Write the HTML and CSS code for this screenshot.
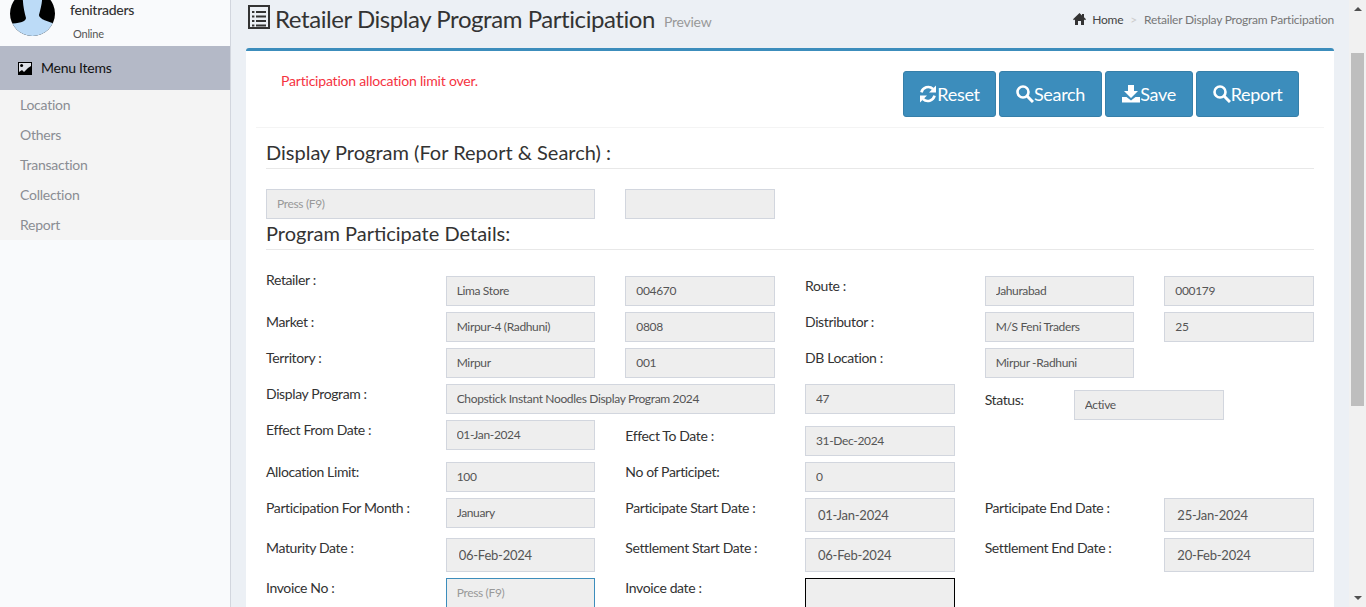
FILE: index.html
```html
<!DOCTYPE html>
<html lang="en">
<head>
    <meta charset="UTF-8">
    <meta name="viewport" content="width=device-width, initial-scale=1.0">
    <title>Retailer Display Program Participation</title>
    <link rel="stylesheet" href="styles.css">
</head>
<body>
    <div class="page">
        <aside class="sidebar">
            <div class="user-panel">
                <svg class="avatar" width="45" height="36" viewBox="0 9 45 36">
                    <clipPath id="avatarClip"><circle cx="22.5" cy="22.5" r="22.5"/></clipPath>
                    <g clip-path="url(#avatarClip)">
                        <rect width="45" height="45" fill="#000"/>
                        <path d="M13 0H32C33 10 31 16 29 24C29 27 33 29 45 33V45H0V33C8 32 16 31 16 27C14 20 12 10 13 0Z" fill="#bcdbf7"/>
                    </g>
                </svg>
                <div class="user-info">
                    <div class="user-name">fenitraders</div>
                    <div class="user-status">Online</div>
                </div>
            </div>
            <div class="menu-title">
                <svg width="14" height="13" viewBox="0 0 14 13">
                    <rect width="14" height="13" fill="#000"/>
                    <path d="M1 1H13V4L10 6L6 10L4 8L1 10Z" fill="#dfe1e8"/>
                    <circle cx="3.6" cy="3.6" r="1.5" fill="#000"/>
                </svg>
                <span>Menu Items</span>
            </div>
            <ul class="menu">
                <li>Location</li>
                <li>Others</li>
                <li>Transaction</li>
                <li>Collection</li>
                <li>Report</li>
            </ul>
        </aside>

        <main class="main">
            <div class="content-header">
                <h1>
                    <svg width="22" height="24" viewBox="0 0 22 24">
                        <rect x="1" y="1" width="20" height="22" fill="none" stroke="#333" stroke-width="2"/>
                        <path d="M4 7H6.4M8 7H18M4 11.6H6.4M8 11.6H18M4 16H6.4M8 16H18M4 20.4H6.4M8 20.4H18" stroke="#333" stroke-width="2"/>
                    </svg>
                    <span>Retailer Display Program Participation</span>
                    <small>Preview</small>
                </h1>
                <div class="breadcrumb">
                    <svg width="13" height="12" viewBox="0 0 13 12">
                        <path d="M6.5 0L9 2.4V1H11V4.3L13 6.2L12 7.2L11 6.4V12H8V8H5V12H2V6.4L1 7.2L0 6.2Z" fill="#333"/>
                    </svg>
                    <span class="crumb-home">Home</span>
                    <span class="crumb-sep">&gt;</span>
                    <span class="crumb-current">Retailer Display Program Participation</span>
                </div>
            </div>

            <section class="box">
                <div class="box-header">
                    <p class="alert">Participation allocation limit over.</p>
                    <div class="actions">
                        <button class="btn reset" type="button">
                            <svg width="18" height="18" viewBox="0 0 18 18" fill="none">
                                <path d="M2.4 7.4A7 7 0 0 1 14 4" stroke="#fff" stroke-width="2.6"/>
                                <path d="M17 0.5V7.5H10Z" fill="#fff"/>
                                <path d="M15.6 10.6A7 7 0 0 1 4 14" stroke="#fff" stroke-width="2.6"/>
                                <path d="M1 17.5V10.5H8Z" fill="#fff"/>
                            </svg>Reset</button>
                        <button class="btn search" type="button">
                            <svg width="18" height="18" viewBox="0 0 18 18" fill="none">
                                <circle cx="7" cy="7" r="5.5" stroke="#fff" stroke-width="2.6"/>
                                <path d="M11 11L17 17" stroke="#fff" stroke-width="3"/>
                            </svg>Search</button>
                        <button class="btn save" type="button">
                            <svg width="18" height="18" viewBox="0 0 18 18">
                                <path d="M6 0H12V6H16L9 13L2 6H6Z" fill="#fff"/>
                                <path d="M0 12H4.5L9 15.5L13.5 12H18V17.5H0Z" fill="#fff"/>
                            </svg>Save</button>
                        <button class="btn report" type="button">
                            <svg width="18" height="18" viewBox="0 0 18 18" fill="none">
                                <circle cx="7" cy="7" r="5.5" stroke="#fff" stroke-width="2.6"/>
                                <path d="M11 11L17 17" stroke="#fff" stroke-width="3"/>
                            </svg>Report</button>
                    </div>
                </div>

                <form class="form">
                    <h4 class="section-title first">Display Program (For Report &amp; Search) :</h4>
                    <div class="row">
                        <input class="field span-2" type="text" readonly placeholder="Press (F9)">
                        <input class="field" type="text" readonly>
                    </div>

                    <h4 class="section-title">Program Participate Details:</h4>
                    <div class="row details-start">
                        <label>Retailer :</label>
                        <input class="field shift" type="text" readonly value="Lima Store">
                        <input class="field shift" type="text" readonly value="004670">
                        <label class="shift">Route :</label>
                        <input class="field shift" type="text" readonly value="Jahurabad">
                        <input class="field shift" type="text" readonly value="000179">
                    </div>
                    <div class="row">
                        <label>Market :</label>
                        <input class="field" type="text" readonly value="Mirpur-4 (Radhuni)">
                        <input class="field" type="text" readonly value="0808">
                        <label>Distributor :</label>
                        <input class="field" type="text" readonly value="M/S Feni Traders">
                        <input class="field" type="text" readonly value="25">
                    </div>
                    <div class="row">
                        <label>Territory :</label>
                        <input class="field" type="text" readonly value="Mirpur">
                        <input class="field" type="text" readonly value="001">
                        <label>DB Location :</label>
                        <input class="field" type="text" readonly value="Mirpur -Radhuni">
                    </div>
                    <div class="row tight">
                        <label>Display Program :</label>
                        <input class="field span-2" type="text" readonly value="Chopstick Instant Noodles Display Program 2024">
                        <input class="field" type="text" readonly value="47">
                        <div class="status span-2">
                            <label class="shift status-label">Status:</label>
                            <input class="field shift status-field" type="text" readonly value="Active">
                        </div>
                    </div>
                    <div class="row">
                        <label>Effect From Date :</label>
                        <input class="field" type="text" readonly value="01-Jan-2024">
                        <label class="shift">Effect To Date :</label>
                        <input class="field shift" type="text" readonly value="31-Dec-2024">
                    </div>
                    <div class="row">
                        <label>Allocation Limit:</label>
                        <input class="field" type="text" readonly value="100">
                        <label>No of Participet:</label>
                        <input class="field" type="text" readonly value="0">
                    </div>
                    <div class="row">
                        <label>Participation For Month :</label>
                        <input class="field" type="text" readonly value="January">
                        <label>Participate Start Date :</label>
                        <input class="field date" type="text" readonly value="01-Jan-2024">
                        <label>Participate End Date :</label>
                        <input class="field date" type="text" readonly value="25-Jan-2024">
                    </div>
                    <div class="row">
                        <label>Maturity Date :</label>
                        <input class="field date" type="text" readonly value="06-Feb-2024">
                        <label>Settlement Start Date :</label>
                        <input class="field date" type="text" readonly value="06-Feb-2024">
                        <label>Settlement End Date :</label>
                        <input class="field date" type="text" readonly value="20-Feb-2024">
                    </div>
                    <div class="row">
                        <label>Invoice No :</label>
                        <input class="field focus-blue" type="text" readonly placeholder="Press (F9)">
                        <label>Invoice date :</label>
                        <input class="field focus-black date-height" type="text" readonly>
                    </div>
                </form>
            </section>
        </main>

        <div class="scrollbar">
            <span class="arrow-up"></span>
            <div class="thumb"></div>
            <span class="arrow-down"></span>
        </div>
    </div>
</body>
</html>
```

FILE: styles.css
```css
* {
    box-sizing: border-box;
    letter-spacing: -0.018em;
}

body {
    margin: 0;
    font-family: Lato, "Open Sans", sans-serif;
    font-size: 14px;
    color: #333;
}

.page {
    display: flex;
    height: 607px;
    overflow: hidden;
}

/* sidebar */
.sidebar {
    width: 231px;
    flex-shrink: 0;
    background-color: #f9fafc;
    border-right: 1px solid #d2d6de;
}

.user-panel {
    display: flex;
    height: 46px;
    padding-left: 10px;
    background-color: #f9fafc;
}

.avatar {
    flex-shrink: 0;
}

.user-info {
    margin-left: 15px;
}

.user-name {
    line-height: 20px;
    font-size: 14px;
    font-weight: 500;
}

.user-status {
    margin: 8px 0 0 3px;
    line-height: 12px;
    font-size: 11px;
    color: #555;
}

.menu-title {
    display: flex;
    align-items: center;
    gap: 9px;
    height: 44px;
    padding-left: 18px;
    background-color: #b4b9c7;
    color: #111;
}

.menu-title span {
    margin-top: -2px;
}

.menu {
    list-style: none;
    margin: 0;
    padding: 0;
    background-color: #f4f4f4;
}

.menu li {
    height: 30px;
    padding-left: 20px;
    line-height: 30px;
    color: #8a8d93;
}

/* main area */
.main {
    flex: 1;
    min-width: 0;
    padding: 0 15px;
    background-color: #ecf0f5;
}

.content-header {
    display: flex;
    justify-content: space-between;
    height: 48px;
}

.content-header h1 {
    display: flex;
    align-items: flex-start;
    margin: 5px 0 0 2px;
    font-size: 24px;
    line-height: 30px;
    font-weight: 400;
}

.content-header h1 span {
    margin: -1px 0 0 5px;
}

.content-header small {
    margin: 2px 0 0 9px;
    font-size: 14px;
    color: #999;
}

.breadcrumb {
    display: flex;
    align-items: center;
    height: 12px;
    margin-top: 13px;
    font-size: 12px;
}

.crumb-home {
    margin-left: 6px;
    color: #444;
}

.crumb-sep {
    margin: 0 7px;
    color: #ccc;
}

.crumb-current {
    color: #777;
}

.box {
    height: 600px;
    background-color: #fff;
    border-top: 3px solid #3c8dbc;
    border-radius: 3px;
}

.box-header {
    display: flex;
    justify-content: space-between;
    height: 77px;
    margin: 0 10px;
    padding: 20px 25px 0;
    border-bottom: 1px solid #f4f4f4;
}

.alert {
    margin: 0;
    line-height: 20px;
    color: #f5333f;
    letter-spacing: -0.014em;
}

.actions {
    display: flex;
    gap: 3px;
}

.btn {
    display: flex;
    align-items: center;
    justify-content: center;
    height: 46px;
    padding: 0;
    font-family: inherit;
    font-size: 18px;
    color: #fff;
    background-color: #3c8dbc;
    border: 1px solid #367fa9;
    border-radius: 3px;
}

.reset {
    width: 93px;
}

.search {
    width: 103px;
}

.save {
    width: 88px;
}

.report {
    width: 103px;
}

/* form */
.form {
    padding: 0 20px;
}

.section-title {
    margin: 3px 0 0;
    padding-bottom: 5px;
    font-size: 20px;
    line-height: 22px;
    font-weight: 400;
    letter-spacing: 0;
    border-bottom: 1px solid #e8e8e8;
}

.section-title.first {
    margin-top: 13px;
    margin-bottom: 20px;
}

.row {
    display: grid;
    grid-template-columns: repeat(6, minmax(0, 1fr));
    column-gap: 30px;
    align-items: start;
    margin-bottom: 6px;
}

.row.tight {
    margin-bottom: 0;
}

.row:nth-of-type(1) {
    margin-bottom: 3px;
}

.details-start {
    margin-top: 20px;
}

.span-2 {
    grid-column: span 2;
}

label {
    line-height: 20px;
    white-space: nowrap;
    letter-spacing: -0.027em;
}

.shift {
    margin-top: 6px;
}

.field {
    width: 100%;
    height: 30px;
    padding: 0 10px 2px;
    font-family: inherit;
    font-size: 12px;
    letter-spacing: -0.029em;
    color: #555;
    background-color: #eee;
    border: 1px solid #d2d6de;
    border-radius: 0;
    outline: none;
}

.field::placeholder {
    color: #999;
}

.date {
    height: 34px;
    padding: 0 12px;
    font-size: 13px;
    letter-spacing: -0.018em;
}

.date-height {
    height: 34px;
}

.focus-blue {
    border-color: #3c8dbc;
}

.focus-black {
    border-color: #000;
}

.status {
    display: flex;
}

.status-label {
    flex: 0 0 89px;
}

.status-field {
    width: 150px;
}

/* scrollbar drawn as a column, the window does not scroll */
.scrollbar {
    display: flex;
    flex-direction: column;
    align-items: center;
    width: 17px;
    flex-shrink: 0;
    background-color: #f1f1f1;
}

.arrow-up,
.arrow-down {
    width: 0;
    height: 0;
    border-left: 4px solid transparent;
    border-right: 4px solid transparent;
}

.arrow-up {
    margin-top: 7px;
    border-bottom: 4px solid #505050;
}

.arrow-down {
    margin-top: auto;
    margin-bottom: 7px;
    border-top: 4px solid #505050;
}

.thumb {
    width: 13px;
    height: 353px;
    margin-top: 42px;
    background-color: #bebebe;
}
```
